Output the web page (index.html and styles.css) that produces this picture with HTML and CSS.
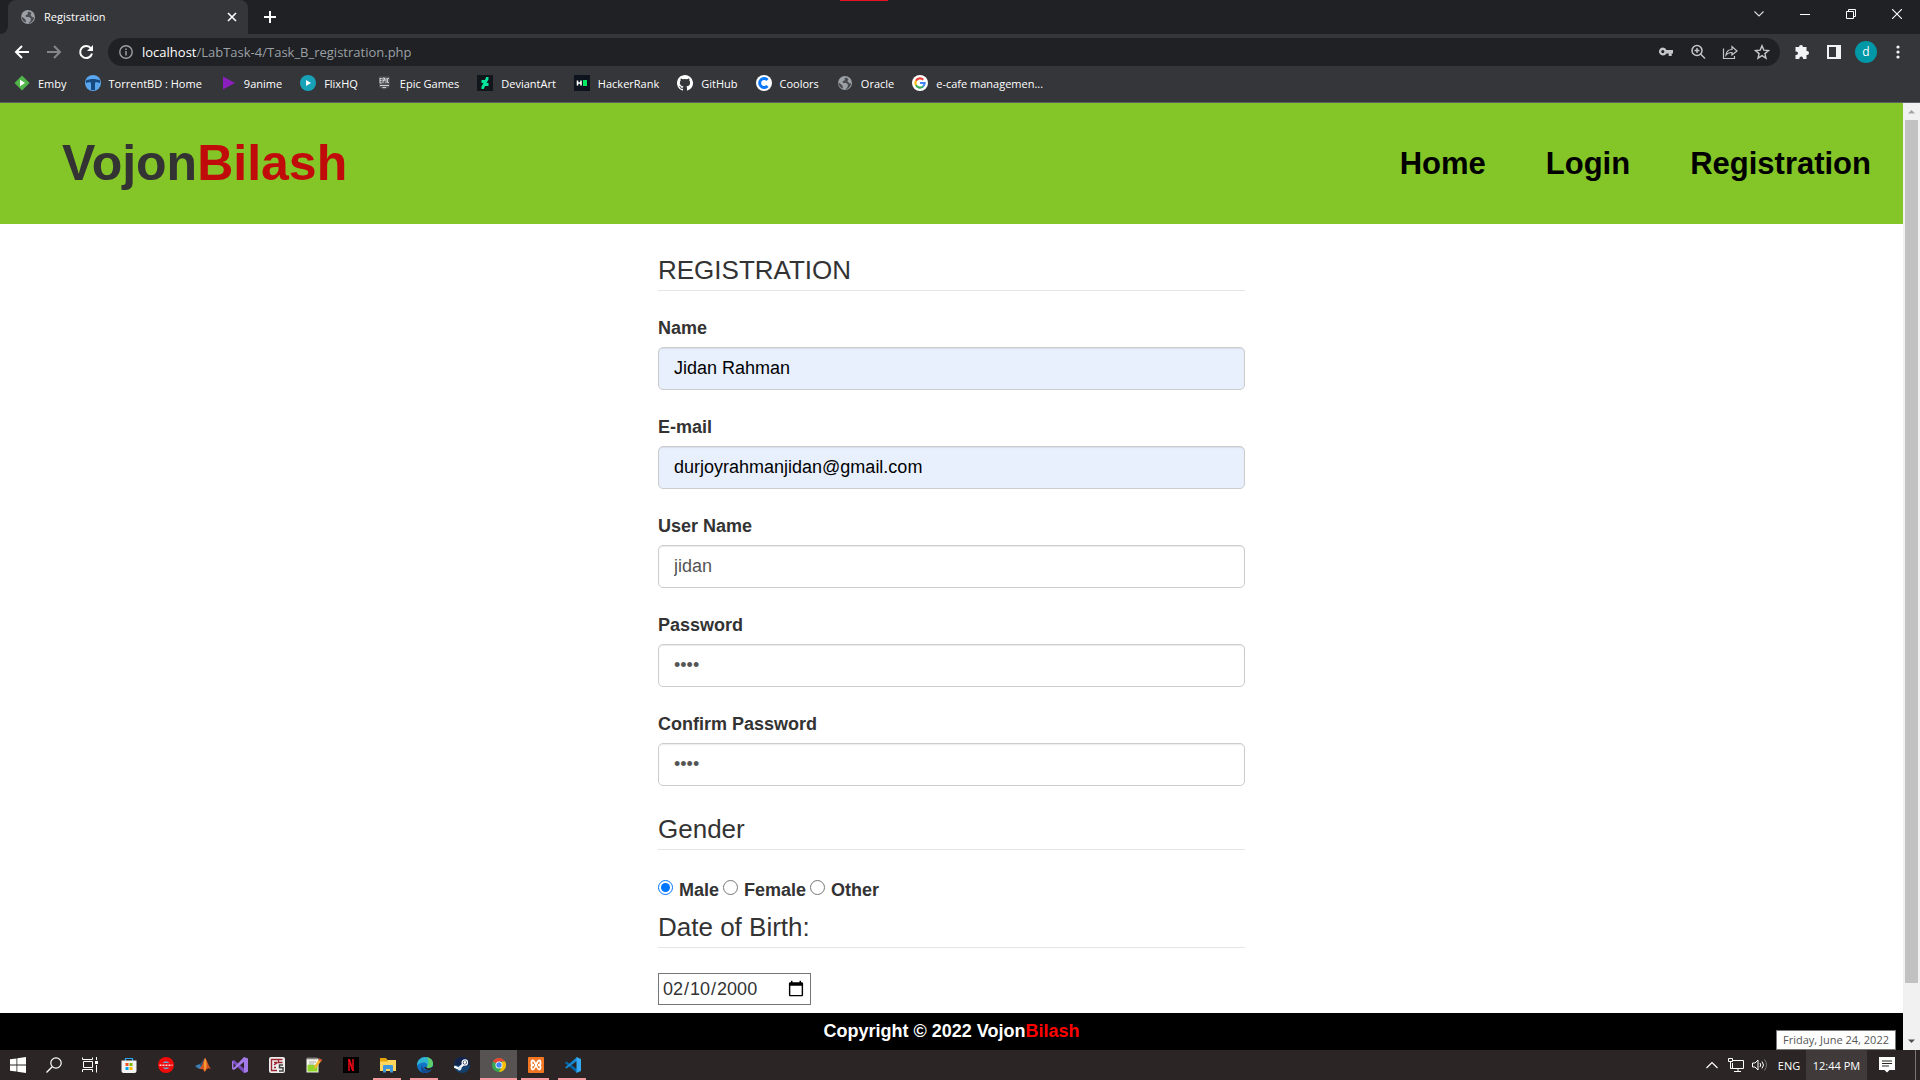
FILE: index.html
```html
<!DOCTYPE html>
<html lang="en">
<head>
<meta charset="utf-8">
<meta name="viewport" content="width=device-width, initial-scale=1">
<title>Registration</title>
<link rel="stylesheet" href="styles.css">
</head>
<body>
<svg class="defs" aria-hidden="true">
  <symbol id="globe" viewBox="0 0 16 16"><circle cx="8" cy="8" r="7" fill="#9aa0a6"/><path d="M9 2.500 7.500 3.500 8 5 5.500 6.500 6 8h3l2 1.500-.5 2.500L8.500 14.500C10 14.500 14 12 14 8.500L12 8l-1.500-2 1-2z" fill="#4a4c50"/><path d="M1.500 7.500 5 10l1 2-.5 1.500C3 12.500 1.500 10.500 1.500 7.500z" fill="#4a4c50"/></symbol>
</svg>
<header class="browser">
  <div class="tabstrip">
    <span class="notch"></span>
    <div class="tab">
      <svg class="fav" viewBox="0 0 16 16"><use href="#globe"/></svg>
      <span class="tab-title">Registration</span>
      <button class="icon-btn tab-close" aria-label="Close tab"><svg width="10" height="10" viewBox="0 0 10 10"><path d="M1 1l8 8M9 1L1 9" stroke="#fff" stroke-width="1.600"/></svg></button>
    </div>
    <button class="icon-btn new-tab" aria-label="New tab"><svg width="14" height="14" viewBox="0 0 14 14"><path d="M7 1v12M1 7h12" stroke="#fff" stroke-width="2"/></svg></button>
    <div class="window-controls">
      <button class="icon-btn" aria-label="Search tabs"><svg width="12" height="12" viewBox="0 0 12 12"><path d="M1.500 3.500 6 8l4.500-4.500" fill="none" stroke="#ddd" stroke-width="1.100"/></svg></button>
      <button class="icon-btn" aria-label="Minimize"><svg width="10" height="10" viewBox="0 0 10 10"><path d="M0 5.500h10" stroke="#fff"/></svg></button>
      <button class="icon-btn" aria-label="Restore"><svg width="10" height="10" viewBox="0 0 10 10"><path d="M.5 2.500h7v7h-7zM2.500 2.500v-2h7v7h-2" fill="none" stroke="#fff"/></svg></button>
      <button class="icon-btn" aria-label="Close"><svg width="10" height="10" viewBox="0 0 10 10"><path d="M0 0l10 10M10 0L0 10" stroke="#fff" stroke-width="1.100"/></svg></button>
    </div>
  </div>
  <div class="toolbar">
    <button class="icon-btn" aria-label="Back"><svg width="16" height="16" viewBox="0 0 16 16"><path d="M15 8H2M8 2L2 8l6 6" fill="none" stroke="#fff" stroke-width="2"/></svg></button>
    <button class="icon-btn" aria-label="Forward"><svg width="16" height="16" viewBox="0 0 16 16"><path d="M1 8h13M8 2l6 6-6 6" fill="none" stroke="#85868a" stroke-width="2"/></svg></button>
    <button class="icon-btn" aria-label="Reload"><svg width="16" height="16" viewBox="0 0 16 16"><path d="M13 4.500A6 6 0 1 0 14 9.500" fill="none" stroke="#fff" stroke-width="2"/><path d="M15 1v6H9z" fill="#fff"/></svg></button>
    <div class="omnibox">
      <svg width="14" height="14" viewBox="0 0 14 14"><circle cx="7" cy="7" r="6.200" fill="none" stroke="#9aa0a6" stroke-width="1.400"/><path d="M7 6v4.500M7 3.400V5" stroke="#9aa0a6" stroke-width="1.500"/></svg>
      <span class="url"><b>localhost</b>/LabTask-4/Task_B_registration.php</span>
      <button class="icon-btn" aria-label="Passwords"><svg width="16" height="16" viewBox="0 0 16 16"><path fill-rule="evenodd" d="M4.800 3.500a4 4 0 0 1 3.700 2.600H15v3.300h-1.300V12h-3V9.400H8.500A4 4 0 1 1 4.800 3.500zm0 2.500a1.600 1.600 0 1 0 0 3.200 1.600 1.600 0 0 0 0-3.200z" fill="#c4c7ca"/></svg></button>
      <button class="icon-btn" aria-label="Zoom"><svg width="16" height="16" viewBox="0 0 16 16"><circle cx="7" cy="6.500" r="5" fill="none" stroke="#c4c7ca" stroke-width="1.500"/><path d="M10.500 10l4.500 4.500M7 4v5M4.500 6.500h5" stroke="#c4c7ca" stroke-width="1.400"/></svg></button>
      <button class="icon-btn" aria-label="Share"><svg width="16" height="16" viewBox="0 0 16 16"><path d="M1.500 4.500v10h11V12M4 11c.5-4 3-5.500 6-5.500v-3L15 7l-5 4V8.500C7.500 8.500 5.500 9 4 11z" fill="none" stroke="#c4c7ca" stroke-width="1.200"/></svg></button>
      <button class="icon-btn" aria-label="Bookmark"><svg width="16" height="16" viewBox="0 0 16 16"><path d="M8 1.800l1.800 4.300 4.700.4-3.600 3.100 1.100 4.600L8 11.700l-4 2.500 1.100-4.600-3.600-3.100 4.700-.4z" fill="none" stroke="#c4c7ca" stroke-width="1.400"/></svg></button>
    </div>
    <button class="icon-btn" aria-label="Extensions"><svg width="16" height="16" viewBox="0 0 16 16"><path d="M5 3a2 2 0 0 1 4 0h3.500v4H13a2 2 0 0 1 0 4h-.5v4H9v-.8a1.800 1.800 0 0 0-3.600 0v.8H1.500v-4h.7a1.800 1.800 0 0 0 0-3.600h-.7V3z" fill="#f1f3f4"/></svg></button>
    <button class="icon-btn" aria-label="Side panel"><svg width="14" height="14" viewBox="0 0 14 14"><path d="M1 1h12v12H1z" fill="none" stroke="#f1f3f4" stroke-width="2"/><path d="M9 0h5v14H9z" fill="#f1f3f4"/></svg></button>
    <button class="icon-btn" aria-label="Profile"><span class="avatar">d</span></button>
    <button class="icon-btn" aria-label="Menu"><svg width="4" height="14" viewBox="0 0 4 14"><g fill="#f1f3f4"><circle cx="2" cy="2" r="1.600"/><circle cx="2" cy="7" r="1.600"/><circle cx="2" cy="12" r="1.600"/></g></svg></button>
  </div>
  <nav class="bookmarks" aria-label="Bookmarks">
    <a href="#"><svg class="fav" viewBox="0 0 16 16"><path d="M8 .5 15.500 8 8 15.500.5 8z" fill="#52b54b"/><path d="M6 4.800v6.400L11 8z" fill="#fff"/></svg>Emby</a>
    <a href="#"><svg class="fav" viewBox="0 0 16 16"><circle cx="8" cy="8" r="8" fill="#5aa7f0"/><path d="M1 5.500C5 3.500 11 3.500 15 5.500V8l-4-1-1 1v7H6V8L5 7 1 8z" fill="#174a80"/></svg>TorrentBD : Home</a>
    <a href="#"><svg class="fav" viewBox="0 0 16 16"><path d="M3 1.500v13L15 8z" fill="#8b1fbd"/></svg>9anime</a>
    <a href="#"><svg class="fav" viewBox="0 0 16 16"><circle cx="8" cy="8" r="8" fill="#17a2b8"/><path d="M6 5v6l5-3z" fill="#fff"/></svg>FlixHQ</a>
    <a href="#"><svg class="fav" viewBox="0 0 16 16"><path d="M3 1.500h10.500V12L8.200 14.500 3 12z" fill="#55565a"/><path d="M4 3v5M4 3.500h1.800M4 5.500h1.500M4 8h1.800M7 8V3h1.500v2.500H7M10 3v5M13 3.500h-1.500v4H13M4 10.500h9M6.500 12.500h3.500" fill="none" stroke="#ddd" stroke-width=".9"/></svg>Epic Games</a>
    <a href="#"><svg class="fav" viewBox="0 0 16 16"><path d="M0 0h16v16H0z" fill="#10161b"/><path d="M11.500 2v2.500L9.500 8h2v3H8l-1.200 3H4.500v-2.500l2-3.500h-2V5H8l1.200-3z" fill="#05e59c"/></svg>DeviantArt</a>
    <a href="#"><svg class="fav" viewBox="0 0 16 16"><path d="M0 0h16v16H0z" fill="#0e141e"/><path d="M3.500 5.500v5M7 5.500v5M4 8h3" stroke="#fff" stroke-width="1.600"/><path d="M9 5h4v6H9z" fill="#00ea64"/></svg>HackerRank</a>
    <a href="#"><svg class="fav" viewBox="0 0 16 16"><path fill="#fff" d="M8 0C3.600 0 0 3.600 0 8c0 3.500 2.300 6.500 5.500 7.600.4.100.5-.2.500-.4v-1.500c-2 .4-2.600-.5-2.700-1-.1-.2-.5-.9-.8-1.100-.3-.2-.7-.5 0-.5.600 0 1.100.600 1.200.800.700 1.200 1.900.9 2.300.7.100-.5.300-.9.500-1.100-1.800-.2-3.600-.9-3.600-3.900 0-.9.300-1.600.8-2.100-.1-.2-.4-1 .1-2.100 0 0 .7-.2 2.200.8a7.500 7.500 0 0 1 4 0c1.500-1 2.200-.8 2.200-.8.400 1.100.2 1.900.1 2.100.5.600.8 1.300.8 2.100 0 3.100-1.900 3.700-3.700 3.900.3.300.6.700.6 1.500v2.200c0 .2.100.5.500.4A8 8 0 0 0 8 0z"/></svg>GitHub</a>
    <a href="#"><svg class="fav" viewBox="0 0 16 16"><circle cx="8" cy="8" r="8" fill="#fff"/><path d="M11.500 5A4.500 4.500 0 1 0 11.500 11" fill="none" stroke="#0877f9" stroke-width="3"/></svg>Coolors</a>
    <a href="#"><svg class="fav" viewBox="0 0 16 16"><use href="#globe"/></svg>Oracle</a>
    <a href="#"><svg class="fav" viewBox="0 0 16 16"><circle cx="8" cy="8" r="8" fill="#fff"/><g fill="none" stroke-width="2.200"><path d="M11.300 4.700A4.600 4.600 0 0 0 4 5.700" stroke="#ea4335"/><path d="M4 5.700a4.600 4.600 0 0 0 0 4.600" stroke="#fbbc05"/><path d="M4 10.300a4.600 4.600 0 0 0 7 1.200" stroke="#34a853"/><path d="M11 11.500A4.600 4.600 0 0 0 12.600 8H8" stroke="#4285f4"/></g></svg>e-cafe managemen...</a>
  </nav>
  <span class="capture-mark"></span>
</header>

<div class="viewport">
  <div class="page">
    <header class="site-header">
      <a class="brand" href="#">Vojon<span>Bilash</span></a>
      <nav class="site-nav"><a href="#">Home</a><a href="#">Login</a><a href="#">Registration</a></nav>
    </header>
    <main class="content">
      <form class="form">
        <h1 class="legend">REGISTRATION</h1>
        <div class="group"><label for="name">Name</label><input class="field filled" id="name" type="text" value="Jidan Rahman"></div>
        <div class="group"><label for="email">E-mail</label><input class="field filled" id="email" type="email" value="durjoyrahmanjidan@gmail.com"></div>
        <div class="group"><label for="user">User Name</label><input class="field" id="user" type="text" value="jidan"></div>
        <div class="group"><label for="pass">Password</label><input class="field" id="pass" type="password" value="1234"></div>
        <div class="group"><label for="confirm">Confirm Password</label><input class="field" id="confirm" type="password" value="1234"></div>
        <h2 class="legend">Gender</h2>
        <div class="radios">
          <input type="radio" id="male" name="gender" checked><label for="male">Male</label>
          <input type="radio" id="female" name="gender"><label for="female">Female</label>
          <input type="radio" id="other" name="gender"><label for="other">Other</label>
        </div>
        <h2 class="legend">Date of Birth:</h2>
        <input class="date" type="date" value="2000-02-10" aria-label="Date of Birth">
      </form>
    </main>
    <footer class="site-footer">Copyright © 2022 Vojon<span>Bilash</span></footer>
  </div>
  <div class="scrollbar" aria-hidden="true">
    <svg viewBox="0 0 17 17"><path d="M5 10.500h7L8.500 7z" fill="#a3a3a3"/></svg>
    <div class="track"><div class="thumb"></div></div>
    <svg viewBox="0 0 17 17"><path d="M5 6.500h7L8.500 10z" fill="#505050"/></svg>
  </div>
</div>

<footer class="taskbar">
  <div class="system">
    <button class="icon-btn" aria-label="Start"><svg width="16" height="16" viewBox="0 0 16 16"><path d="M0 2.300 6.500 1.400V7.600H0zM7.300 1.300 16 0v7.600H7.300zM0 8.400h6.500v6.200L0 13.700zM7.300 8.400H16V16l-8.700-1.300z" fill="#fff"/></svg></button>
    <button class="icon-btn" aria-label="Search"><svg width="16" height="16" viewBox="0 0 16 16"><circle cx="10" cy="6" r="5.200" fill="none" stroke="#fff" stroke-width="1.200"/><path d="M6.200 9.800.5 15.500" stroke="#fff" stroke-width="1.300"/></svg></button>
    <button class="icon-btn" aria-label="Task view"><svg width="16" height="16" viewBox="0 0 16 16"><path d="M.5.500v2h10v-2M1.500 4.500h9v6h-9zM.5 15v-2.500h10V15M14.500 0v3M14.500 8v7.500" fill="none" stroke="#fff"/><path d="M13 4h3v3h-3z" fill="#fff"/></svg></button>
  </div>
  <div class="apps">
    <button class="icon-btn" aria-label="Store"><svg viewBox="0 0 16 16"><path d="M4.500 4V1.500h7V4" fill="none" stroke="#28a8ea" stroke-width="1.200"/><path d="M.5 3.500h15V14q0 2-2 2h-11q-2 0-2-2z" fill="#f3f3f3"/><path d="M4.500 6h3v3h-3z" fill="#f25022"/><path d="M8.500 6h3v3h-3z" fill="#7fba00"/><path d="M4.500 10h3v3h-3z" fill="#00a4ef"/><path d="M8.500 10h3v3h-3z" fill="#ffb900"/></svg></button>
    <button class="icon-btn" aria-label="Circuit app"><svg viewBox="0 0 16 16"><circle cx="8" cy="8" r="8" fill="#f00a0a"/><path d="M4.500 6a4.500 4.500 0 0 1 7 0zM4.500 10.500a4.500 4.500 0 0 0 7 0z" fill="#6ba6d8"/><path d="M1.500 8.300h13" stroke="#fbd6d6" stroke-width="1.600" stroke-dasharray="2 1"/></svg></button>
    <button class="icon-btn" aria-label="MATLAB"><svg viewBox="0 0 16 16"><path d="M0 9l4.500-2L7 10l-3 2z" fill="#3a7fb5"/><path d="M4.500 7C7 6 8 2 10 1L7 10z" fill="#2c4f73"/><path d="M10 1c2 2 3.500 8 6 11-3-2-4 0-6.500 3C8 11 6 12 4 12c3-1 4-8 6-11z" fill="#d9541e"/><path d="M10 1c2 2 2 9 0 13.500C8 8 9 4 10 1z" fill="#f49b35"/></svg></button>
    <button class="icon-btn" aria-label="Visual Studio"><svg viewBox="0 0 16 16"><path d="M0 4l2-1 10 8.500L16 15l-4 1L0 5z" fill="#7b4bc0"/><path d="M0 12V4l1.500 1v6L12 0l4 1.500v13L12 16V5L2 13z" fill="#a47ae8"/></svg></button>
    <button class="icon-btn" aria-label="CS app"><svg viewBox="0 0 16 16"><rect width="16" height="16" rx="2" fill="#eee"/><path d="M13.500 2.500h-11v11H8M5 5.500h3M5 10.500h2M5 8l3.500-2.500M9.500 2.500v3h4" fill="none" stroke="#9b2431" stroke-width="1.400"/><path d="M14 8h-3.500v2.700H14V14h-4" fill="none" stroke="#444" stroke-width="1.500"/></svg></button>
    <button class="icon-btn" aria-label="Notepad++"><svg viewBox="0 0 16 16"><path d="M.5 1.500h12v14H.5z" fill="#f4f4ea"/><path d="M1.500 8c3-1 6 1 10-1v7.500h-10z" fill="#8fd52b"/><path d="M2 0v2.500M4 0v2.500M6 0v2.500M8 0v2.500M10 0v2.500" stroke="#777"/><path d="M3 5h7M3 7h5" stroke="#aaa"/><path d="M13.500 1.500 16 3 10 11l-2 1 .3-2.500z" fill="#f5b52e"/><path d="M13.500 1.500 16 3l-1 1.500L12.500 3z" fill="#d8443c"/></svg></button>
    <button class="icon-btn" aria-label="Netflix"><svg viewBox="0 0 16 16"><path d="M0 0h16v16H0z" fill="#000"/><path d="M5 2h2v12H5zM9 2h2v12H9z" fill="#b1060f"/><path d="M5 2h2l4 12H9z" fill="#e50914"/></svg></button>
    <button class="icon-btn open" aria-label="File Explorer"><svg viewBox="0 0 16 16"><path d="M0 1h6l1.500 2H16v11H0z" fill="#e5a50a"/><path d="M0 4.500h7L8 3h8v11H0z" fill="#ffd75e"/><path d="M3 15.500V9q0-1 1-1h8q1 0 1 1v6.500h-3V12H6v3.500z" fill="#3e96dd"/></svg></button>
    <button class="icon-btn open" aria-label="Edge"><svg viewBox="0 0 16 16"><circle cx="8" cy="8" r="8" fill="#1373c5"/><path d="M.1 7C1 3 4 0 8 0c5 0 8 3.500 8 7 0 2.500-2 4-4.500 4-1.500 0-2.200-.5-1.800-1 1.300-2 .2-4.500-2.700-4.500C4 5.500 1 7 .1 9z" fill="#2fb5cf"/><path d="M10 .3c4.500 1 6 3.700 6 6.700 0 2.500-2 4-4.500 4-1.500 0-2.200-.5-1.800-1C12 8 12 4 10 .3z" fill="#5fd068"/><path d="M5.500 8.500c0 4 4 5.500 8.500 4-1.500 2.500-4 3.500-6 3.500-3 0-4.500-3-4-5 .2-1 1-2 1.500-2.500z" fill="#134b92"/><path d="M9.700 10.200c-.3.600.5 1 2 1 1.500 0 3-.6 3.800-1.600l.5 1.400-2 1.800c-3 1-6.500-.3-7-2.800z" fill="#2b2625"/></svg></button>
    <button class="icon-btn" aria-label="Steam"><svg viewBox="0 0 16 16"><circle cx="8" cy="8" r="8" fill="#14406f"/><path d="M0 8a8 8 0 0 1 16 0z" fill="#12244c"/><path d="M.2 9.500 5 11.500 10.500 6" fill="none" stroke="#fff" stroke-width="2.400"/><circle cx="10.800" cy="5.500" r="2.700" fill="#12244c" stroke="#fff" stroke-width="1.200"/><circle cx="10.800" cy="5.500" r="1.400" fill="#fff"/><circle cx="5.500" cy="11.500" r="2" fill="#dce6ef"/></svg></button>
    <button class="icon-btn open active" aria-label="Chrome"><svg viewBox="0 0 16 16"><circle cx="8" cy="8" r="7" fill="#34a853"/><path d="M8 8 1.900 4.500A7 7 0 0 1 14.100 4.500H8z" fill="#ea4335"/><path d="M14.100 4.500A7 7 0 0 1 8 15l3-5.200V4.500z" fill="#fbbc04"/><circle cx="8" cy="8" r="3.500" fill="#fff"/><circle cx="8" cy="8" r="2.700" fill="#4285f4"/></svg></button>
    <button class="icon-btn open" aria-label="XAMPP"><svg viewBox="0 0 16 16"><rect width="16" height="16" rx="1" fill="#f37623"/><path d="M6 8H5Q3.500 8 3.500 6V5Q3.500 3.500 5 3.500 6 3.500 8 8 10 3.500 11 3.500q1.500 0 1.500 1.500v1Q12.500 8 11 8h-1M5 8q-1.500 0-1.500 2v1q0 1.500 1.500 1.500 1 0 3-4.500 2 4.500 3 4.500 1.500 0 1.500-1.500v-1Q12.500 8 11 8" fill="none" stroke="#fff" stroke-width="1.800"/></svg></button>
    <button class="icon-btn open" aria-label="Visual Studio Code"><svg viewBox="0 0 16 16"><path d="M0 5.500 1.500 4.500 12 12v4L0 6z" fill="#0065a9"/><path d="M0 10.500 12 0v4L1.500 11.500z" fill="#1688d2"/><path d="M11.500 0 16 2v12l-4.500 2z" fill="#35a9f1"/></svg></button>
  </div>
  <div class="tray">
    <button class="icon-btn" aria-label="Show hidden icons"><svg width="14" height="14" viewBox="0 0 14 14"><path d="M1.500 10 7 4.500 12.500 10" fill="none" stroke="#fff" stroke-width="1.200"/></svg></button>
    <button class="icon-btn" aria-label="Network"><svg width="16" height="14" viewBox="0 0 16 14"><path d="M5 2.500h10.500v8H4.500V5M10 10.500v3M6 13.500h7M.5.500h4v3h-4zM2.500 3.500v7h2" fill="none" stroke="#fff"/></svg></button>
    <button class="icon-btn" aria-label="Volume"><svg width="16" height="14" viewBox="0 0 16 14"><path d="M.5 5v4h2.500l3 3V2L3 5zM8 5q1.500 2 0 4M10 3.500q3 3.500 0 7" fill="none" stroke="#fff"/><path d="M12.500 1.500q4 5.500 0 11" fill="none" stroke="#777"/></svg></button>
    <button class="icon-btn lang">ENG</button>
    <button class="icon-btn clock">12:44 PM</button>
    <button class="icon-btn notes" aria-label="Notifications"><svg width="16" height="16" viewBox="0 0 16 16"><path d="M0 0h16v13h-5.500L8 15.500 5.500 13H0z" fill="#fff"/><path d="M3 4h10M3 6.500h10M3 9h7" stroke="#2b2625"/></svg></button>
    <span class="peek"></span>
    <span class="tooltip" role="tooltip">Friday, June 24, 2022</span>
  </div>
</footer>
</body>
</html>
```
FILE: styles.css
```css
* { box-sizing: border-box; }

body {
  margin: 0;
  height: 100vh;
  display: flex;
  flex-direction: column;
  overflow: hidden;
  font-family: "Liberation Sans", Arial, sans-serif;
  color: #333;
}

a { color: inherit; text-decoration: none; }

svg { display: block; flex: none; }

.defs { position: absolute; width: 0; height: 0; }

.icon-btn {
  display: flex;
  align-items: center;
  justify-content: center;
  flex: none;
  margin: 0;
  padding: 0;
  border: 0;
  background: none;
  color: #fff;
  font: inherit;
}

/* Browser frame */
.browser,
.taskbar {
  font-family: "Open Sans", "Noto Sans", sans-serif;
  font-size: 11px;
  color: #fff;
}

.browser {
  position: relative;
  flex: none;
  background: #35363a;
  border-bottom: 1px solid #5f6064;
}

.tabstrip {
  display: flex;
  height: 34px;
  background: #202124;
}

.notch {
  width: 8px;
  background: #35363a;
  overflow: hidden;
}

.notch::before {
  content: "";
  display: block;
  height: 34px;
  background: #202124;
  border-bottom-right-radius: 8px;
}

.tab {
  display: flex;
  align-items: center;
  width: 240px;
  padding: 0 8px 1px 12px;
  border-radius: 8px 8px 0 0;
  background: #35363a;
}

.fav { width: 16px; height: 16px; }

.tab-title { flex: 1; margin-left: 8px; }

.tab-close { width: 16px; height: 16px; }

.new-tab { width: 44px; }

.window-controls { display: flex; margin-left: auto; padding-bottom: 6px; }

.window-controls .icon-btn { width: 46px; }

.toolbar {
  display: flex;
  align-items: center;
  padding: 4px 6px 0 6px;
}

.toolbar .icon-btn { width: 32px; height: 28px; }

.omnibox {
  display: flex;
  align-items: center;
  flex: 1;
  height: 28px;
  margin: 0 6px;
  padding: 0 2px 0 11px;
  border-radius: 14px;
  background: #202124;
}

.url {
  flex: 1;
  margin-left: 9px;
  font-size: 13px;
  color: #9aa0a6;
}

.url b { font-weight: 400; color: #fff; }

.avatar {
  width: 22px;
  height: 22px;
  border-radius: 50%;
  background: #0097a7;
  font-size: 12px;
  line-height: 21px;
  text-align: center;
}

.bookmarks {
  display: flex;
  align-items: center;
  gap: 18px;
  height: 36px;
  padding: 0 14px 2px;
  white-space: nowrap;
}

.bookmarks a { display: flex; align-items: center; gap: 8px; }

.capture-mark {
  position: absolute;
  top: 0;
  left: 840px;
  width: 48px;
  height: 1px;
  background: #e81123;
}

/* Page */
.viewport { display: flex; flex: 1; min-height: 0; background: #fff; }

.page { display: flex; flex-direction: column; flex: 1; min-width: 0; }

.site-header {
  display: flex;
  justify-content: space-between;
  padding: 32px 32px 32px 62px;
  background: #84c528;
  font-weight: 700;
}

.brand { font-size: 50px; line-height: 57px; }

.brand span { color: #c10b0b; }

.site-nav {
  display: flex;
  gap: 60px;
  font-size: 31px;
  line-height: 57px;
  color: #000;
}

.content { flex: 1; min-height: 0; overflow: hidden; }

.form {
  max-width: 587px;
  margin: 0 auto;
  padding-top: 28px;
  font-size: 18px;
  line-height: 25px;
}

.legend {
  margin: 0 0 25px;
  padding-bottom: 2px;
  border-bottom: 1px solid #e5e5e5;
  font-size: 26px;
  font-weight: 400;
  line-height: 36px;
}

.group { margin-bottom: 25px; }

.form label { font-weight: 700; }

.group label { display: block; margin-bottom: 6px; }

.field {
  display: block;
  width: 100%;
  height: 43px;
  padding: 7px 15px;
  border: 1px solid #ccc;
  border-radius: 5px;
  box-shadow: inset 0 1px 1px rgba(0, 0, 0, 0.08);
  background: #fff;
  color: #555;
  font: inherit;
}

.field.filled { background: #e8f0fe; color: #000; }

.radios { display: flex; height: 34px; }

.radios input {
  width: 15px;
  height: 15px;
  margin: 5px 6px 0 0;
  accent-color: #0075ff;
}

.radios label { margin: 3px 4px 0 0; }

.date {
  display: block;
  width: 153px;
  height: 32px;
  padding: 1px 3px;
  border: 1px solid #767676;
  border-radius: 0;
  background: #fff;
  color: #333;
  font: inherit;
}

.site-footer {
  flex: none;
  padding: 6px 0;
  background: #000;
  color: #fff;
  font-size: 18px;
  font-weight: 700;
  line-height: 25px;
  text-align: center;
}

.site-footer span { color: #f00; }

.scrollbar {
  display: flex;
  flex-direction: column;
  flex: none;
  width: 17px;
  background: #f1f1f1;
}

.scrollbar svg { width: 17px; height: 17px; }

.track { flex: 1; padding: 0 2px; }

.thumb { height: 94.5%; background: #c1c1c1; }

/* Taskbar */
.taskbar {
  display: flex;
  flex: none;
  height: 30px;
  background: #2b2625;
}

.system,
.apps,
.tray { display: flex; }

.system .icon-btn { width: 36px; }

.apps { margin-left: 2px; }

.apps .icon-btn { position: relative; width: 37px; }

.apps svg { width: 16px; height: 16px; }

.open::after {
  content: "";
  position: absolute;
  left: 4px;
  right: 5px;
  bottom: 0;
  height: 2px;
  background: #f59a9f;
}

.apps .active { background: #575352; }

.active::after { left: 0; right: 0; }

.tray { position: relative; margin-left: auto; }

.tray .icon-btn { width: 24px; }

.tray .lang { width: 34px; }

.tray .clock { width: 61px; background: #403b3a; }

.tray .notes { width: 40px; }

.peek { width: 5px; margin-left: 8px; border-left: 1px solid #777; }

.tooltip {
  position: absolute;
  right: 24px;
  bottom: 30px;
  width: 120px;
  border: 1px solid #767676;
  background: #fff;
  color: #575757;
  font-size: 11px;
  line-height: 18px;
  text-align: center;
  white-space: nowrap;
}
```
